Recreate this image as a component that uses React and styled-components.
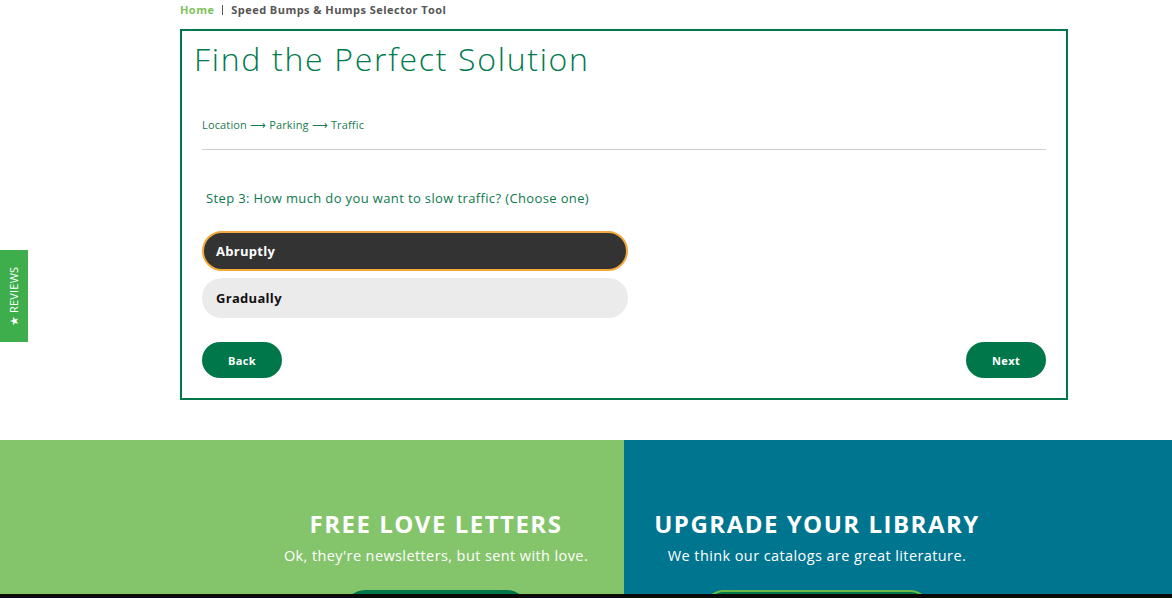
import React, { useState } from "react";
import styled, { createGlobalStyle } from "styled-components";

const GlobalStyle = createGlobalStyle`
  body {
    margin: 0;
    background: #fff;
    font-family: "Open Sans", "Liberation Sans", sans-serif;
  }
`;

const Page = styled.div`
  width: 1172px;
  height: 598px;
  overflow: hidden;
`;

const Main = styled.div`
  margin-left: 180px;
  width: 888px;
`;

const Crumbs = styled.div`
  display: flex;
  align-items: center;
  gap: 8px;
  font-size: 11px;
  font-weight: 700;
  letter-spacing: 0.45px;
  color: #555;
  padding-bottom: 10px;
  box-sizing: border-box;
  height: 29px;
`;

const CrumbLink = styled.a`
  color: #7dc35b;
  text-decoration: none;
`;

const Sep = styled.span`
  width: 1px;
  height: 10px;
  background: #555;
`;

const Box = styled.div`
  border: 2px solid #00774a;
  padding: 6px 20px 19px 20px;
  box-sizing: border-box;
  height: 371px;
`;

const Title = styled.h1`
  margin: 0 0 0 -8px;
  font-size: 32px;
  font-weight: 300;
  letter-spacing: 1.7px;
  line-height: 44px;
  color: #007a4d;
`;

const Steps = styled.div`
  margin-top: 36px;
  font-size: 11px;
  letter-spacing: 0.15px;
  color: #1a7a50;
  line-height: 16px;
`;

const Rule = styled.hr`
  border: 0;
  border-top: 1px solid #cfcfcf;
  margin: 16px 0 0 0;
`;

const Question = styled.p`
  margin: 39px 0 0 4px;
  font-size: 13px;
  letter-spacing: 0.37px;
  line-height: 18px;
  color: #0c7a4e;
`;

const Options = styled.div`
  margin-top: 24px;
  width: 426px;
  display: flex;
  flex-direction: column;
  gap: 7px;
`;

const Option = styled.button`
  height: 40px;
  border-radius: 20px;
  border: 2px solid ${(p) => (p.selected ? "#f4a93b" : "transparent")};
  background: ${(p) => (p.selected ? "#333333" : "#ebebeb")};
  color: ${(p) => (p.selected ? "#fff" : "#111")};
  font-family: inherit;
  font-size: 13px;
  font-weight: 700;
  letter-spacing: 0.3px;
  text-align: left;
  padding: 0 12px;
  cursor: pointer;
`;

const Nav = styled.div`
  margin-top: 24px;
  display: flex;
  justify-content: space-between;
`;

const NavButton = styled.button`
  width: 80px;
  height: 36px;
  border-radius: 18px;
  border: 0;
  background: #00774a;
  color: #fff;
  font-family: inherit;
  font-size: 11px;
  font-weight: 700;
  letter-spacing: 0.4px;
  cursor: pointer;
`;

const Footer = styled.div`
  margin-top: 40px;
  display: grid;
  grid-template-columns: 624px 1fr;
  height: 158px;
`;

const FooterCell = styled.div`
  background: ${(p) => p.bg};
  padding: 69px ${(p) => p.padRight}px 0 ${(p) => p.padLeft}px;
  display: flex;
  flex-direction: column;
  align-items: center;
  color: #fff;
`;

const FooterHeading = styled.h2`
  margin: 0;
  font-size: 24px;
  font-weight: 700;
  letter-spacing: 1.5px;
  line-height: 30px;
  white-space: nowrap;
`;

const FooterText = styled.p`
  margin: 6px 0 0 0;
  font-size: 14.5px;
  letter-spacing: 0.4px;
  line-height: 22px;
  white-space: nowrap;
`;

const FooterButton = styled.div`
  margin-top: 23px;
  width: ${(p) => p.w}px;
  height: 40px;
  border-radius: 20px;
  background: #00774a;
  border: ${(p) => (p.outlined ? "2px solid #6cba45" : "0")};
  box-sizing: border-box;
`;

const BottomBar = styled.div`
  position: fixed;
  left: 0;
  bottom: 0;
  width: 100%;
  height: 4px;
  background: #0a0a0a;
`;

const ReviewsTab = styled.div`
  position: fixed;
  left: 0;
  top: 250px;
  width: 28px;
  height: 92px;
  background: #3dae4b;
  display: flex;
  align-items: center;
  justify-content: center;
`;

const ReviewsLabel = styled.span`
  transform: rotate(-90deg);
  white-space: nowrap;
  color: #fff;
  font-size: 11px;
  letter-spacing: 0.2px;
`;

export default function App() {
  const [choice, setChoice] = useState("Abruptly");

  return (
    <>
      <GlobalStyle />
      <Page>
        <Main>
          <Crumbs>
            <CrumbLink href="#">Home</CrumbLink>
            <Sep />
            <span>Speed Bumps &amp; Humps Selector Tool</span>
          </Crumbs>
          <Box>
            <Title>Find the Perfect Solution</Title>
            <Steps>Location ⟶ Parking ⟶ Traffic</Steps>
            <Rule />
            <Question>Step 3: How much do you want to slow traffic? (Choose one)</Question>
            <Options>
              {["Abruptly", "Gradually"].map((o) => (
                <Option key={o} selected={choice === o} onClick={() => setChoice(o)}>
                  {o}
                </Option>
              ))}
            </Options>
            <Nav>
              <NavButton>Back</NavButton>
              <NavButton>Next</NavButton>
            </Nav>
          </Box>
        </Main>
        <Footer>
          <FooterCell bg="#84c46a" padLeft={248} padRight={0}>
            <FooterHeading>FREE LOVE LETTERS</FooterHeading>
            <FooterText>Ok, they're newsletters, but sent with love.</FooterText>
            <FooterButton w={182} />
          </FooterCell>
          <FooterCell bg="#00758f" padLeft={0} padRight={162}>
            <FooterHeading>UPGRADE YOUR LIBRARY</FooterHeading>
            <FooterText>We think our catalogs are great literature.</FooterText>
            <FooterButton w={226} outlined />
          </FooterCell>
        </Footer>
        <ReviewsTab>
          <ReviewsLabel>★ REVIEWS</ReviewsLabel>
        </ReviewsTab>
        <BottomBar />
      </Page>
    </>
  );
}
